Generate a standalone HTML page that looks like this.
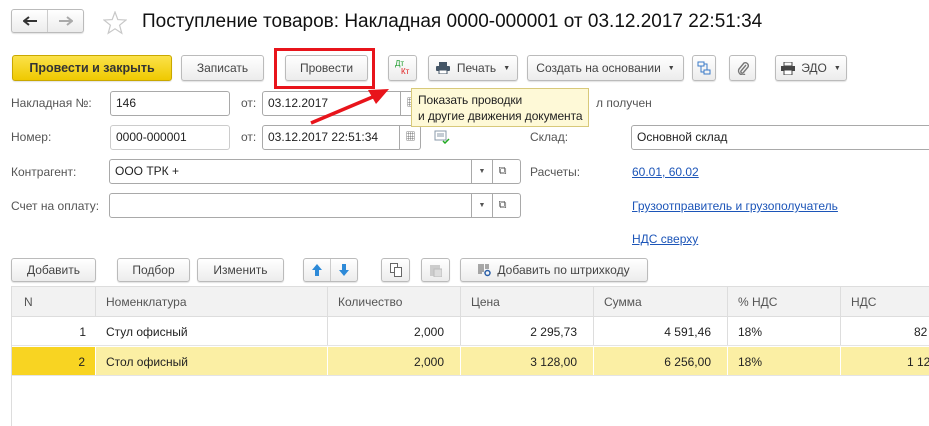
<!DOCTYPE html>
<html><head><meta charset="utf-8"><style>
*{box-sizing:border-box;margin:0;padding:0}
body{width:929px;height:423px;background:#fff;font-family:"Liberation Sans","Noto Sans CJK SC",sans-serif;font-size:12px;color:#333;position:relative;overflow:hidden}
.a{position:absolute}
.btn{position:absolute;border:1px solid #bbb;border-radius:3px;background:linear-gradient(#fff,#ececec);box-shadow:0 1px 1px rgba(0,0,0,.12);display:flex;align-items:center;justify-content:center;color:#444;font-size:12px;white-space:nowrap}
.inp{position:absolute;border:1px solid #a9a9a9;border-radius:3px;background:#fff;height:25px;padding-left:5px;line-height:23px;color:#222}
.lbl{position:absolute;color:#555}
.lnk{position:absolute;color:#1c55b8;text-decoration:underline}
.cell{position:absolute;height:100%;border-right:1px solid #ddd;line-height:30px;padding:0 10px;white-space:nowrap;overflow:hidden}
.r{text-align:right}
.dd{position:absolute;top:0;height:100%;border-left:1px solid #a9a9a9;display:flex;align-items:center;justify-content:center;font-size:7px;color:#555}
</style></head><body>
<!-- nav -->
<div class="btn" style="left:11px;top:9px;width:73px;height:24px;padding:0"><span style="width:37px;height:22px;display:flex;align-items:center;justify-content:center;border-right:1px solid #ccc"><svg width="14" height="10"><path d="M1 5h13M6 1L1 5l5 4" stroke="#333" stroke-width="2" fill="none"/></svg></span><span style="width:36px;height:22px;display:flex;align-items:center;justify-content:center"><svg width="14" height="10"><path d="M0 5h13M8 1l5 4-5 4" stroke="#aaa" stroke-width="2" fill="none"/></svg></span></div>
<svg class="a" style="left:103px;top:11px" width="24" height="24"><polygon points="12,1 14.8,8.6 23,9 16.6,14.2 18.8,22.3 12,17.8 5.2,22.3 7.4,14.2 1,9 9.2,8.6" fill="none" stroke="#c8c8c8" stroke-width="1.2"/></svg>
<div class="a" style="left:142px;top:11px;font-size:19px;color:#111">Поступление товаров: Накладная 0000-000001 от 03.12.2017 22:51:34</div>
<!-- toolbar -->
<div class="btn" style="left:12px;top:55px;width:160px;height:26px;background:linear-gradient(#fbe24a,#efc900);border-color:#c9a800;font-weight:bold;color:#333;font-size:12.5px">Провести и закрыть</div>
<div class="btn" style="left:181px;top:55px;width:83px;height:26px">Записать</div>
<div class="btn" style="left:285px;top:55px;width:83px;height:26px">Провести</div>
<div class="a" style="left:274px;top:48px;width:101px;height:41px;border:3px solid #e8141b"></div>
<div class="btn" style="left:388px;top:55px;width:29px;height:26px;font-size:8px;line-height:8px;display:block;padding:4px 0 0 6px"><span style="color:#1a9a2a">Дт</span><br><span style="color:#e02020;padding-left:6px">Кт</span></div>
<div class="btn" style="left:428px;top:55px;width:90px;height:26px"><svg width="14" height="12" style="margin-right:7px"><rect x="3" y="0" width="8" height="4" fill="#456"/><rect x="0" y="4" width="14" height="5" rx="1" fill="#456"/><rect x="3" y="8" width="8" height="4" fill="#fff" stroke="#456"/></svg>Печать <span style="font-size:7px;margin-left:7px">▼</span></div>
<div class="btn" style="left:527px;top:55px;width:157px;height:26px">Создать на основании <span style="font-size:7px;margin-left:7px">▼</span></div>
<div class="btn" style="left:692px;top:55px;width:24px;height:26px"><svg width="14" height="14"><rect x="1" y="1" width="6" height="4" fill="none" stroke="#3a7ac8"/><rect x="7" y="9" width="6" height="4" fill="none" stroke="#3a7ac8"/><path d="M4 5v6h3M10 9V3H7" stroke="#3a7ac8" fill="none"/></svg></div>
<div class="btn" style="left:729px;top:55px;width:27px;height:26px"><svg width="12" height="14"><path d="M9 4L4 10a1.5 1.5 0 0 0 2 2l5-6a3 3 0 0 0-4-4L2 8a4 4 0 0 0 6 5" stroke="#777" stroke-width="1.4" fill="none"/></svg></div>
<div class="btn" style="left:775px;top:55px;width:72px;height:26px"><svg width="14" height="13" style="margin-right:6px"><rect x="3" y="0" width="8" height="4" fill="none" stroke="#444"/><rect x="0" y="4" width="14" height="5" fill="#444"/><rect x="3" y="8" width="8" height="5" fill="#fff" stroke="#444"/></svg>ЭДО <span style="font-size:7px;margin-left:7px">▼</span></div>
<!-- fields -->
<div class="lbl" style="left:11px;top:96px">Накладная №:</div>
<div class="inp" style="left:110px;top:91px;width:120px">146</div>
<div class="lbl" style="left:241px;top:96px">от:</div>
<div class="inp" style="left:262px;top:91px;width:160px">03.12.2017<div class="dd" style="left:137px;width:22px;font-size:10px">▦</div></div>
<div class="lbl" style="left:596px;top:96px">л получен</div>
<div class="lbl" style="left:11px;top:130px">Номер:</div>
<div class="inp" style="left:110px;top:125px;width:120px;border-color:#ccc">0000-000001</div>
<div class="lbl" style="left:241px;top:130px">от:</div>
<div class="inp" style="left:262px;top:125px;width:159px">03.12.2017 22:51:34<div class="dd" style="left:136px;width:22px;font-size:10px">▦</div></div>
<svg class="a" style="left:434px;top:130px" width="16" height="14"><rect x="1" y="1" width="11" height="9" fill="none" stroke="#8899aa"/><path d="M3 4h7M3 6h7" stroke="#8899aa"/><path d="M9 11l2 2 4-4" stroke="#2a2" stroke-width="1.5" fill="none"/></svg>
<div class="lbl" style="left:530px;top:130px">Склад:</div>
<div class="inp" style="left:631px;top:125px;width:310px">Основной склад</div>
<div class="lbl" style="left:11px;top:165px">Контрагент:</div>
<div class="inp" style="left:109px;top:159px;width:412px">ООО ТРК +<div class="dd" style="left:361px;width:21px">▼</div><div class="dd" style="left:382px;width:20px;font-size:11px">⧉</div></div>
<div class="lbl" style="left:530px;top:165px">Расчеты:</div>
<div class="lnk" style="left:632px;top:165px">60.01, 60.02</div>
<div class="lbl" style="left:11px;top:199px">Счет на оплату:</div>
<div class="inp" style="left:109px;top:193px;width:412px"><div class="dd" style="left:361px;width:21px">▼</div><div class="dd" style="left:382px;width:20px;font-size:11px">⧉</div></div>
<div class="lnk" style="left:632px;top:199px">Грузоотправитель и грузополучатель</div>
<div class="lnk" style="left:632px;top:232px">НДС сверху</div>
<!-- table toolbar -->
<div class="btn" style="left:11px;top:258px;width:85px;height:24px">Добавить</div>
<div class="btn" style="left:117px;top:258px;width:73px;height:24px">Подбор</div>
<div class="btn" style="left:197px;top:258px;width:87px;height:24px">Изменить</div>
<div class="btn" style="left:303px;top:258px;width:55px;height:24px;padding:0"><span style="flex:1;height:22px;display:flex;align-items:center;justify-content:center;border-right:1px solid #ccc"><svg width="10" height="12"><path d="M5 0L0 6h3v6h4V6h3z" fill="#2d8ad8"/></svg></span><span style="flex:1;display:flex;align-items:center;justify-content:center"><svg width="10" height="12"><path d="M5 12L0 6h3V0h4v6h3z" fill="#2d8ad8"/></svg></span></div>
<div class="btn" style="left:381px;top:258px;width:29px;height:24px"><svg width="12" height="14"><rect x="0.5" y="0.5" width="7" height="9" fill="#fff" stroke="#666"/><rect x="4.5" y="4.5" width="7" height="9" fill="#fff" stroke="#666"/></svg></div>
<div class="btn" style="left:421px;top:258px;width:29px;height:24px"><svg width="12" height="14"><rect x="0" y="2" width="10" height="11" fill="#ccc"/><rect x="4" y="6" width="8" height="8" fill="#ddd" stroke="#bbb"/></svg></div>
<div class="btn" style="left:460px;top:258px;width:188px;height:24px"><svg width="14" height="14" style="margin-right:5px"><path d="M1 1v10M3 1v10M5 1v8M8 1v5M10 1v5" stroke="#555"/><circle cx="9.5" cy="10" r="2.5" fill="none" stroke="#2a5fa8" stroke-width="1.5"/></svg>Добавить по штрихкоду</div>
<!-- table -->
<div class="a" style="left:11px;top:286px;width:930px;height:140px;border-left:1px solid #ddd;border-top:1px solid #ddd"></div>
<div class="a" style="left:12px;top:287px;width:930px;height:30px;background:#f2f2f2;border-bottom:1px solid #ddd;color:#555">
<div class="cell" style="left:0;width:84px;padding-left:12px">N</div>
<div class="cell" style="left:84px;width:232px">Номенклатура</div>
<div class="cell" style="left:316px;width:133px">Количество</div>
<div class="cell" style="left:449px;width:133px">Цена</div>
<div class="cell" style="left:582px;width:134px">Сумма</div>
<div class="cell" style="left:716px;width:113px">% НДС</div>
<div class="cell" style="left:829px;width:120px">НДС</div></div>
<div class="a" style="left:12px;top:317px;width:930px;height:29px;border-bottom:1px solid #e4e4e4;color:#222">
<div class="cell r" style="left:0;width:84px;border:0">1</div>
<div class="cell" style="left:84px;width:232px">Стул офисный</div>
<div class="cell r" style="left:316px;width:133px;padding-right:16px">2,000</div>
<div class="cell r" style="left:449px;width:133px;padding-right:16px">2 295,73</div>
<div class="cell r" style="left:582px;width:134px;padding-right:16px">4 591,46</div>
<div class="cell" style="left:716px;width:113px">18%</div>
<div class="a" style="left:902px;top:0;line-height:30px">82</div></div>
<div class="a" style="left:12px;top:347px;width:930px;height:29px;background:#fbefa4;border-bottom:1px solid #e4e4e4;color:#222">
<div class="cell r" style="left:0;width:84px;background:#f8d422;border-right:1px solid #fff">2</div>
<div class="cell" style="left:84px;width:232px;border-color:#fff">Стол офисный</div>
<div class="cell r" style="left:316px;width:133px;padding-right:16px;border-color:#fff">2,000</div>
<div class="cell r" style="left:449px;width:133px;padding-right:16px;border-color:#fff">3 128,00</div>
<div class="cell r" style="left:582px;width:134px;padding-right:16px;border-color:#fff">6 256,00</div>
<div class="cell" style="left:716px;width:113px;border-color:#fff">18%</div>
<div class="a" style="left:895px;top:0;line-height:30px">1 12</div></div>
<!-- tooltip -->
<div class="a" style="left:411px;top:88px;width:178px;height:39px;background:#fef9d7;border:1px solid #d8c97a;padding:3px 0 0 6px;line-height:16px;color:#222;font-size:12px;white-space:nowrap;letter-spacing:-0.1px">Показать проводки<br>и другие движения документа</div>
<!-- arrow -->
<svg class="a" style="left:0;top:0" width="929" height="423"><line x1="311" y1="123" x2="375" y2="96" stroke="#e8141b" stroke-width="3.5"/><polygon points="389,89 368,90 376,104" fill="#e8141b"/></svg>
</body></html>
